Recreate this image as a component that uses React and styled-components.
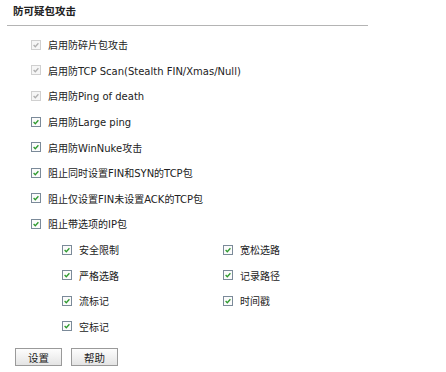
import styled, { createGlobalStyle } from 'styled-components'

const Global = createGlobalStyle`
   html, body {
      margin: 0;
      padding: 0;
      background: #fff;
   }
   body {
      font-family: "DejaVu Sans", "Noto Sans CJK SC", sans-serif;
      font-size: 10px;
      color: #222;
   }
`
const Page = styled.div`
   width: 446px;
   height: 372px;
   padding: 4px 0 0 7px;
   box-sizing: border-box;
`
const Title = styled.div`
   font-weight: bold;
   font-size: 10.5px;
   padding-left: 6px;
   height: 14px;
   line-height: 14px;
`
const Divider = styled.div`
   width: 361px;
   height: 1px;
   background: #b4b4b4;
   margin: 7px 0 6px;
`
const List = styled.div`
   display: flex;
   flex-direction: column;
   padding-left: 24px;
`
const Row = styled.label`
   display: flex;
   align-items: center;
   height: 25.6px;
   gap: 7px;
   white-space: nowrap;
`
const Sub = styled.div`
   display: grid;
   grid-template-columns: 161px 160px;
   grid-auto-rows: 25.6px;
   padding-left: 55px;
`
const Box = styled.span`
   width: 8px;
   height: 8px;
   border: 1px solid ${p => (p.$disabled ? '#d0d0d0' : '#7b8a99')};
   background: ${p => (p.$disabled ? '#f6f6f6' : '#fbfbfb')};
   display: inline-flex;
   align-items: center;
   justify-content: center;
   flex-shrink: 0;
`
const Buttons = styled.div`
   display: flex;
   gap: 9px;
   padding: 9px 0 0 8px;
`
const Button = styled.button`
   width: 47px;
   height: 18px;
   padding: 0;
   border: 1px solid #9a9a9a;
   background: linear-gradient(#fdfdfd, #e4e4e4);
   font-family: "DejaVu Sans", "Noto Sans CJK SC", sans-serif;
   font-size: 10.5px;
   color: #222;
`

const Check = ({ disabled }) => (
   <Box $disabled={disabled}>
      <svg width="6" height="6" viewBox="0 0 6 6">
         <path
            d="M0.6 3 L2.3 4.7 L5.4 1.2"
            fill="none"
            stroke={disabled ? '#b0b0b0' : '#2e9a2e'}
            strokeWidth="1.3"
         />
      </svg>
   </Box>
)

const items = [
   { text: '启用防碎片包攻击', disabled: true },
   { text: '启用防TCP Scan(Stealth FIN/Xmas/Null)', disabled: true },
   { text: '启用防Ping of death', disabled: true },
   { text: '启用防Large ping' },
   { text: '启用防WinNuke攻击' },
   { text: '阻止同时设置FIN和SYN的TCP包' },
   { text: '阻止仅设置FIN未设置ACK的TCP包' },
   { text: '阻止带选项的IP包' }
]

const options = ['安全限制', '宽松选路', '严格选路', '记录路径', '流标记', '时间戳', '空标记']

const App = () => {
   return (
      <Page>
         <Global />
         <Title>防可疑包攻击</Title>
         <Divider />
         <List>
            {items.map(it => (
               <Row key={it.text}>
                  <Check disabled={it.disabled} />
                  {it.text}
               </Row>
            ))}
         </List>
         <Sub>
            {options.map(o => (
               <Row key={o}>
                  <Check />
                  {o}
               </Row>
            ))}
         </Sub>
         <Buttons>
            <Button>设置</Button>
            <Button>帮助</Button>
         </Buttons>
      </Page>
   )
}

export default App
